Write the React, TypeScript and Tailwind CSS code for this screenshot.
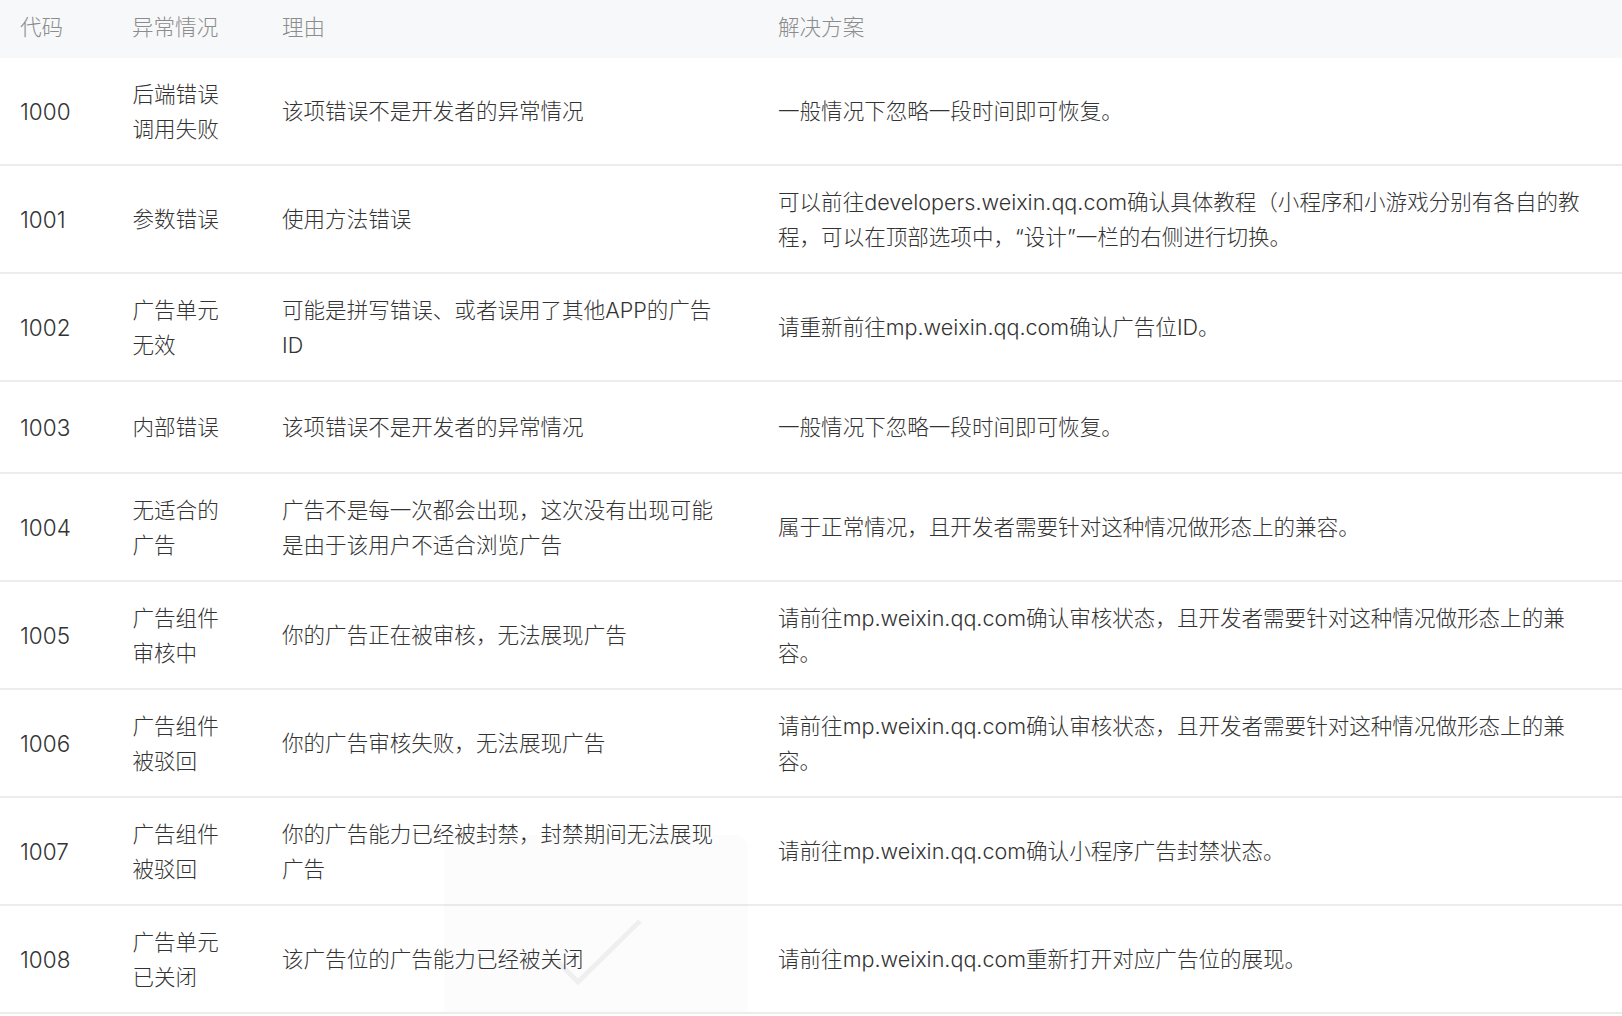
const rows = [
  { code: "1000", type: ["后端错误", "调用失败"], reason: ["该项错误不是开发者的异常情况"], fix: ["一般情况下忽略一段时间即可恢复。"] },
  {
    code: "1001",
    type: ["参数错误"],
    reason: ["使用方法错误"],
    fix: ["可以前往developers.weixin.qq.com确认具体教程（小程序和小游戏分别有各自的教", "程，可以在顶部选项中，“设计”一栏的右侧进行切换。"],
  },
  { code: "1002", type: ["广告单元", "无效"], reason: ["可能是拼写错误、或者误用了其他APP的广告", "ID"], fix: ["请重新前往mp.weixin.qq.com确认广告位ID。"] },
  { code: "1003", type: ["内部错误"], reason: ["该项错误不是开发者的异常情况"], fix: ["一般情况下忽略一段时间即可恢复。"], short: true },
  {
    code: "1004",
    type: ["无适合的", "广告"],
    reason: ["广告不是每一次都会出现，这次没有出现可能", "是由于该用户不适合浏览广告"],
    fix: ["属于正常情况，且开发者需要针对这种情况做形态上的兼容。"],
  },
  {
    code: "1005",
    type: ["广告组件", "审核中"],
    reason: ["你的广告正在被审核，无法展现广告"],
    fix: ["请前往mp.weixin.qq.com确认审核状态，且开发者需要针对这种情况做形态上的兼", "容。"],
  },
  {
    code: "1006",
    type: ["广告组件", "被驳回"],
    reason: ["你的广告审核失败，无法展现广告"],
    fix: ["请前往mp.weixin.qq.com确认审核状态，且开发者需要针对这种情况做形态上的兼", "容。"],
  },
  {
    code: "1007",
    type: ["广告组件", "被驳回"],
    reason: ["你的广告能力已经被封禁，封禁期间无法展现", "广告"],
    fix: ["请前往mp.weixin.qq.com确认小程序广告封禁状态。"],
  },
  { code: "1008", type: ["广告单元", "已关闭"], reason: ["该广告位的广告能力已经被关闭"], fix: ["请前往mp.weixin.qq.com重新打开对应广告位的展现。"] },
];

function Lines({ lines }: { lines: string[] }) {
  return (
    <div className={lines.length > 1 ? "pt-0.5" : ""}>
      {lines.map((line) => (
        <div key={line} className="whitespace-nowrap">
          {line}
        </div>
      ))}
    </div>
  );
}

export default function App() {
  return (
    <div className="relative h-[1016px] w-full overflow-hidden bg-white font-['Inter','Noto_Sans_CJK_SC',sans-serif] text-[21.55px] leading-[35px] font-light text-[#333333]">
      <table className="w-full table-fixed border-collapse">
        <thead>
          <tr className="h-[58px] bg-[#f7f8fa] text-left text-[#8c8c8c]">
            <th className="w-[112px] pb-1 pl-5 font-light">代码</th>
            <th className="w-[150px] pb-1 pl-5 font-light">异常情况</th>
            <th className="w-[496px] pb-1 pl-5 font-light">理由</th>
            <th className="pb-1 pl-5 font-light">解决方案</th>
          </tr>
        </thead>
        <tbody>
          {rows.map((row) => (
            <tr key={row.code} className={`border-b-2 border-[#ececec] ${row.short ? "h-[92px]" : row.code === "1000" ? "h-[107px]" : "h-[108px]"}`}>
              <td className="pl-5 text-[22.5px]">{row.code}</td>
              <td className="pl-[20.5px]">
                <Lines lines={row.type} />
              </td>
              <td className="pl-5">
                <Lines lines={row.reason} />
              </td>
              <td className="pl-5">
                <Lines lines={row.fix} />
              </td>
            </tr>
          ))}
        </tbody>
      </table>

      {/* toast fading out over the table */}
      <div className="absolute top-[835px] left-[444px] h-[177px] w-[304px] rounded-t-xl bg-black/[0.012]">
        <svg className="absolute top-[83px] left-[111px]" width="90" height="75" viewBox="0 0 90 75" fill="none">
          <path d="M3 44 L23 64 L85 3" stroke="#000000" strokeOpacity="0.05" strokeWidth="5" />
        </svg>
      </div>
    </div>
  );
}
